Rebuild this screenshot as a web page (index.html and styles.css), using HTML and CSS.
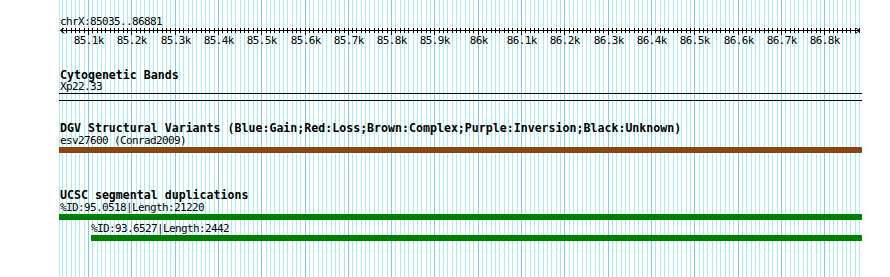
FILE: index.html
```html
<!DOCTYPE html>
<html>
<head>
<meta charset="utf-8">
<title>chrX:85035..86881</title>
<link rel="stylesheet" href="styles.css">
</head>
<body>
<div class="browser">
  <svg class="grid" width="890" height="277" shape-rendering="crispEdges"></svg>
  <div class="tracks">
    <section class="ruler">
      <div class="seg-label">chrX:85035..86881</div>
      <svg class="ruler-svg" width="890" height="20"></svg>
    </section>

    <section class="track track-cyto">
      <h2 class="track-title">Cytogenetic Bands</h2>
      <div class="feat">
        <div class="feat-label band-label">Xp22.33</div>
        <div class="band"></div>
      </div>
    </section>

    <section class="track track-dgv">
      <h2 class="track-title">DGV Structural Variants (Blue:Gain;Red:Loss;Brown:Complex;Purple:Inversion;Black:Unknown)</h2>
      <div class="feat">
        <div class="feat-label">esv27600 (Conrad2009)</div>
        <div class="bar bar-brown"></div>
      </div>
    </section>

    <section class="track track-ucsc">
      <h2 class="track-title">UCSC segmental duplications</h2>
      <div class="feat">
        <div class="feat-label">%ID:95.0518|Length:21220</div>
        <div class="bar bar-green"></div>
      </div>
      <div class="feat feat-sub" style="margin-left:32px">
        <div class="feat-label">%ID:93.6527|Length:2442</div>
        <div class="bar bar-green" style="width:771px"></div>
      </div>
    </section>
  </div>
</div>
<script src="script.js"></script>
</body>
</html>
```

FILE: styles.css
```css
* {
  box-sizing: border-box;
  margin: 0;
  padding: 0;
}

body {
  background: #ffffff;
  width: 890px;
  height: 277px;
  overflow: hidden;
  font-family: "DejaVu Sans Mono", "Liberation Mono", monospace;
  color: #000000;
}

.browser {
  position: relative;
  width: 890px;
  height: 277px;
}

.grid {
  position: absolute;
  left: 0;
  top: 0;
}

.grid .gmin {
  stroke: #a9eded;
  stroke-width: 1;
}

.grid .gmaj {
  stroke: #88c6ee;
  stroke-width: 1;
}

.tracks {
  position: relative;
}

.ruler {
  padding-top: 15px;
}

.seg-label {
  font-size: 11px;
  letter-spacing: -0.62px;
  line-height: 13px;
  padding-left: 60px;
  white-space: nowrap;
}

.ruler-svg {
  display: block;
}

.ruler-svg .rline {
  stroke: #000000;
  stroke-width: 1;
  fill: none;
}

.ruler-svg .rlabel {
  font-family: "DejaVu Sans Mono", "Liberation Mono", monospace;
  font-size: 11px;
  letter-spacing: -0.62px;
  fill: #000000;
}

.track {
  padding-left: 59px;
  margin-top: 21px;
}

.track-ucsc {
  margin-top: 36px;
}

.track-title {
  font-size: 11.6px;
  font-weight: bold;
  line-height: 12px;
  padding-left: 1px;
  white-space: nowrap;
}

.feat-label {
  font-size: 11px;
  letter-spacing: -0.62px;
  line-height: 13px;
  padding-left: 1px;
  white-space: nowrap;
}

.band-label {
  line-height: 12px;
}

.feat-sub {
  margin-top: 2px;
}

.feat-sub .feat-label {
  padding-left: 0;
}

.band {
  width: 803px;
  height: 8px;
  border-top: 1px solid #000000;
  border-bottom: 1px solid #000000;
}

.bar {
  width: 803px;
  height: 6px;
}

.bar-brown {
  background: #8b4513;
}

.bar-green {
  background: #008000;
}
```

FILE: script.js
```js
(function () {
  var START = 85035, END = 86881, X0 = 59.8, S = 0.43313;
  function px(bp) { return Math.round(X0 + (bp - START) * S) + 0.5; }
  var NS = 'http://www.w3.org/2000/svg';

  var grid = document.querySelector('.grid');
  var g = '<line class="gmin" x1="59.5" y1="0" x2="59.5" y2="277"/>';
  for (var bp = Math.ceil(START / 10) * 10; bp <= END; bp += 10) {
    var x = px(bp);
    g += '<line class="' + (bp % 100 === 0 ? 'gmaj' : 'gmin') + '" x1="' + x + '" y1="0" x2="' + x + '" y2="277"/>';
  }
  grid.innerHTML = g;

  var ruler = document.querySelector('.ruler-svg');
  var r = '<g shape-rendering="crispEdges">';
  r += '<line class="rline" x1="60" y1="2.5" x2="860" y2="2.5"/>';
  for (bp = Math.ceil(START / 10) * 10; bp <= END; bp += 10) {
    x = px(bp);
    var major = bp % 100 === 0;
    r += '<line class="rline" x1="' + x + '" y1="0" x2="' + x + '" y2="' + (major ? 7 : 5) + '"/>';
  }
  r += '</g>';
  r += '<polyline class="rline" points="64.5,-0.5 60.5,2.5 64.5,5.5"/>';
  r += '<polyline class="rline" points="855.5,-0.5 859.5,2.5 855.5,5.5"/>';
  for (bp = 85100; bp <= END; bp += 100) {
    x = px(bp);
    var label = (bp / 1000).toString() + 'k';
    r += '<text class="rlabel" text-anchor="middle" x="' + (x + 0.3) + '" y="16">' + label + '</text>';
  }
  ruler.innerHTML = r;
})();
```
